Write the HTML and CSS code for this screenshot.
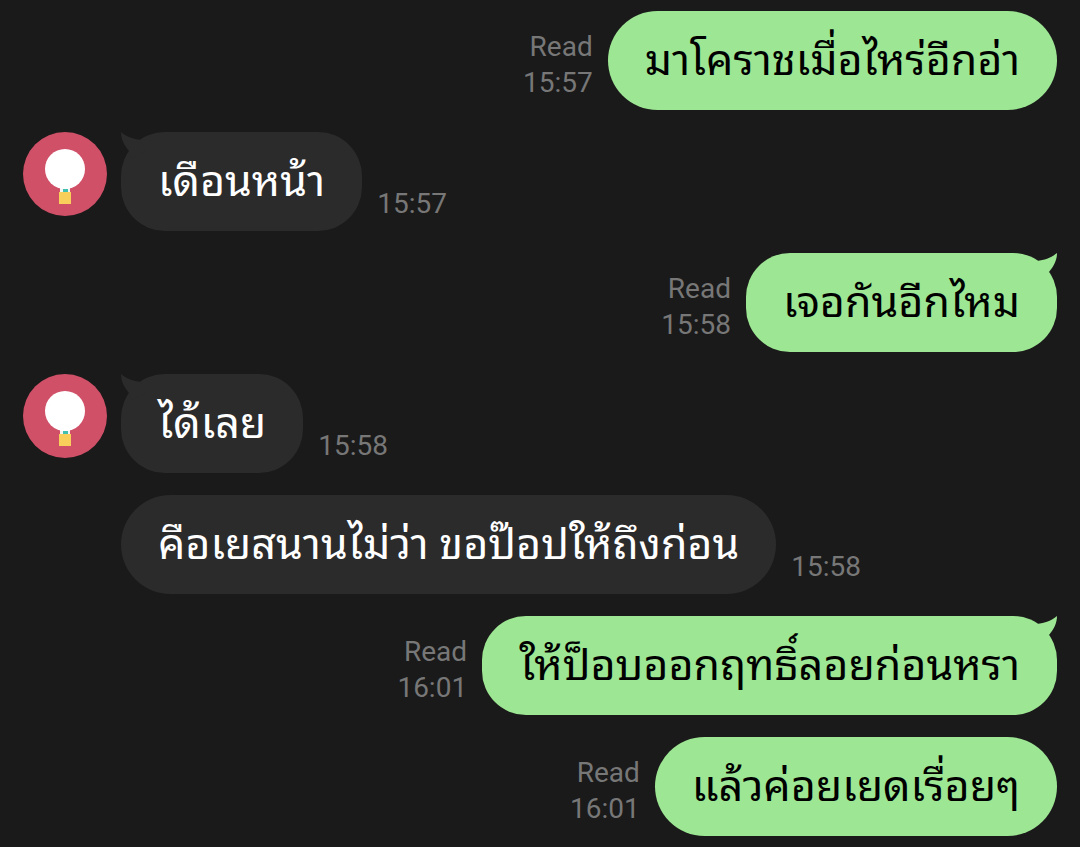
FILE: index.html
```html
<!DOCTYPE html>
<html lang="th">
<head>
<meta charset="utf-8">
<meta name="viewport" content="width=device-width, initial-scale=1">
<title>Chat</title>
<link rel="stylesheet" href="styles.css">
</head>
<body>
<svg class="defs" aria-hidden="true">
  <symbol id="balloon" viewBox="0 0 84 84">
    <circle cx="42" cy="42" r="42" fill="#d05068"/>
    <path d="M37 55h10v6H37z" fill="#f4f4f4"/>
    <circle cx="42" cy="37" r="20" fill="#fff"/>
    <path d="M40 57h5v4h-5z" fill="#3fc0b0"/>
    <path d="M36 60h12v12H36z" fill="#f8cf5b"/>
  </symbol>
  <symbol id="tail" viewBox="0 0 44 40">
    <path d="M44 0C38 5 32 7 24 8L20 20L34 26L36 19C41 13 44 7 44 0Z"/>
  </symbol>
</svg>
<main class="chat">
  <article class="message sent">
    <p class="bubble">มาโคราชเมื่อไหร่อีกอ่า</p>
    <div class="meta"><span>Read</span><time>15:57</time></div>
  </article>
  <article class="message received">
    <svg class="avatar" role="img" aria-label="Balloon"><use href="#balloon"/></svg>
    <p class="bubble tailed">เดือนหน้า<svg class="tail" aria-hidden="true"><use href="#tail"/></svg></p>
    <div class="meta"><time>15:57</time></div>
  </article>
  <article class="message sent">
    <p class="bubble tailed">เจอกันอีกไหม<svg class="tail" aria-hidden="true"><use href="#tail"/></svg></p>
    <div class="meta"><span>Read</span><time>15:58</time></div>
  </article>
  <article class="message received">
    <svg class="avatar" role="img" aria-label="Balloon"><use href="#balloon"/></svg>
    <p class="bubble tailed">ได้เลย<svg class="tail" aria-hidden="true"><use href="#tail"/></svg></p>
    <div class="meta"><time>15:58</time></div>
  </article>
  <article class="message received follow">
    <p class="bubble">คือเยสนานไม่ว่า ขอป๊อปให้ถึงก่อน</p>
    <div class="meta"><time>15:58</time></div>
  </article>
  <article class="message sent">
    <p class="bubble tailed">ให้ป็อบออกฤทธิ์ลอยก่อนหรา<svg class="tail" aria-hidden="true"><use href="#tail"/></svg></p>
    <div class="meta"><span>Read</span><time>16:01</time></div>
  </article>
  <article class="message sent">
    <p class="bubble">แล้วค่อยเยดเรื่อยๆ</p>
    <div class="meta"><span>Read</span><time>16:01</time></div>
  </article>
</main>
</body>
</html>
```
FILE: styles.css
```css
* { box-sizing: border-box; }
body { margin: 0; background: #1a1a1a; }
.defs { position: absolute; width: 0; height: 0; }
.chat {
  display: flex;
  flex-direction: column;
  gap: 22px;
  padding: 11px 23px;
  font-family: Roboto, "Noto Sans Thai Looped", "Noto Sans Thai", sans-serif;
}
.message { display: flex; }
.sent { flex-direction: row-reverse; }
.bubble {
  position: relative;
  margin: 0;
  padding: 17px 37px 18px;
  border-radius: 50px;
  font-size: 43px;
  line-height: 64px;
  white-space: nowrap;
}
.tailed { border-radius: 44px; }
.sent .bubble { background: #9de693; color: #000; }
.received .bubble { background: #2b2b2b; color: #fff; }
.avatar { flex: none; width: 84px; height: 84px; margin-right: 14px; }
.follow { padding-left: 98px; }
.tail { position: absolute; top: 0; right: 0; width: 44px; height: 40px; fill: #9de693; }
.received .tail { right: auto; left: 0; transform: scaleX(-1); fill: #2b2b2b; }
.meta {
  display: flex;
  flex-direction: column;
  align-self: flex-end;
  margin: 0 15px 9px;
  color: #777;
  font-size: 28px;
  line-height: 36px;
}
.sent .meta { text-align: right; }
```
